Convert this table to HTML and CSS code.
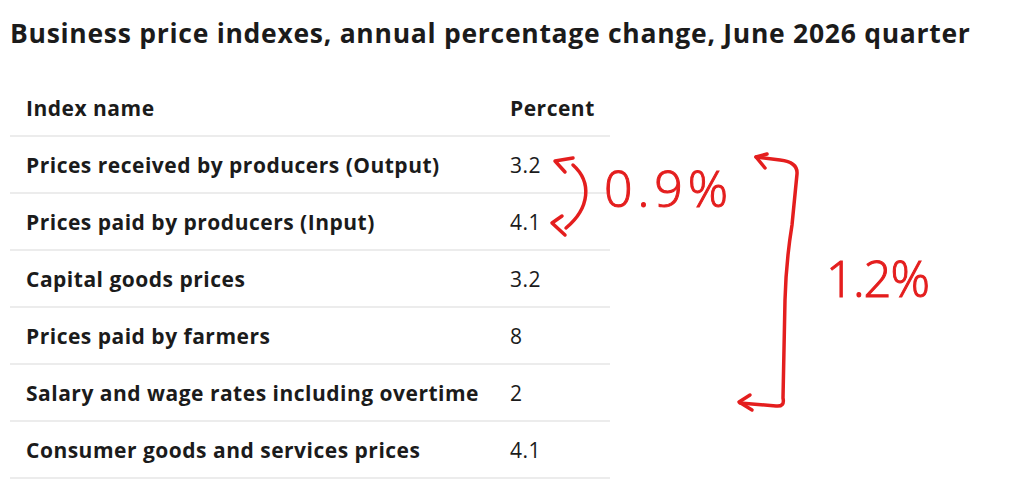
FILE: index.html
```html
<!DOCTYPE html>
<html lang="en">
<head>
<meta charset="utf-8">
<title>Business price indexes</title>
<link rel="stylesheet" href="styles.css">
</head>
<body>
<main class="page">
  <h1 class="title">Business price indexes, annual percentage change, June 2026 quarter</h1>
  <div class="table">
    <div class="row head"><div class="cell">Index name</div><div class="cell num">Percent</div></div>
    <div class="row"><div class="cell">Prices received by producers (Output)</div><div class="cell num">3.2</div></div>
    <div class="row"><div class="cell">Prices paid by producers (Input)</div><div class="cell num">4.1</div></div>
    <div class="row"><div class="cell">Capital goods prices</div><div class="cell num">3.2</div></div>
    <div class="row"><div class="cell">Prices paid by farmers</div><div class="cell num">8</div></div>
    <div class="row"><div class="cell">Salary and wage rates including overtime</div><div class="cell num">2</div></div>
    <div class="row"><div class="cell">Consumer goods and services prices</div><div class="cell num">4.1</div></div>
  </div>
  <svg class="ink" width="1024" height="485" viewBox="0 0 1024 485" xmlns="http://www.w3.org/2000/svg">
    <g class="stroke">
      <path d="M573,165 C592,182 590,208 566,228"/>
      <path d="M573,158 L555,161 L565,172"/>
      <path d="M562,216 L552,223 L565,235"/>
      <path d="M756,157 L780,160 Q798,162 797,174 L792,225 Q786,262 785,300 L783,398 Q785,407 776,406 L740,403"/>
      <path d="M767,154 L756,157 L765,168"/>
      <path d="M750,395 L739,402 L752,410"/>
    </g>
    <text class="hand" x="604" y="207" textLength="124" lengthAdjust="spacing">0.9%</text>
    <text class="hand big" x="826" y="297" textLength="104" lengthAdjust="spacing">1.2%</text>
  </svg>
</main>
</body>
</html>
```
FILE: styles.css
```css
html, body {
  margin: 0;
  padding: 0;
  background: #ffffff;
}
body {
  font-family: "Open Sans", "Liberation Sans", sans-serif;
  color: #1b1b1b;
}
.page {
  position: relative;
  width: 1024px;
  height: 485px;
  padding: 16px 0 0 10px;
  box-sizing: border-box;
  overflow: hidden;
}
.title {
  margin: 0;
  font-size: 26.5px;
  line-height: 34px;
  font-weight: 700;
  letter-spacing: 0.72px;
}
.table {
  margin-top: 30px;
  width: 600px;
  display: flex;
  flex-direction: column;
}
.row {
  display: grid;
  grid-template-columns: 500px 100px;
  height: 57px;
  align-items: center;
  border-bottom: 2px solid #ececec;
  box-sizing: border-box;
}
.cell {
  padding-left: 16px;
  font-size: 21px;
  font-weight: 700;
  letter-spacing: 0.5px;
}
.cell.num {
  font-weight: 400;
  padding-left: 0;
}
.head .cell.num {
  font-weight: 700;
}
.ink {
  position: absolute;
  left: 0;
  top: 0;
  pointer-events: none;
}
.stroke path {
  fill: none;
  stroke: #e41e1e;
  stroke-width: 3.5;
  stroke-linecap: round;
  stroke-linejoin: round;
}
.hand {
  font-family: "Open Sans", "DejaVu Sans", sans-serif;
  font-weight: 300;
  font-size: 50px;
  fill: #e41e1e;
  stroke: #e41e1e;
  stroke-width: 1;
  letter-spacing: 0;
}
.hand.big {
  font-size: 49px;
}
```
